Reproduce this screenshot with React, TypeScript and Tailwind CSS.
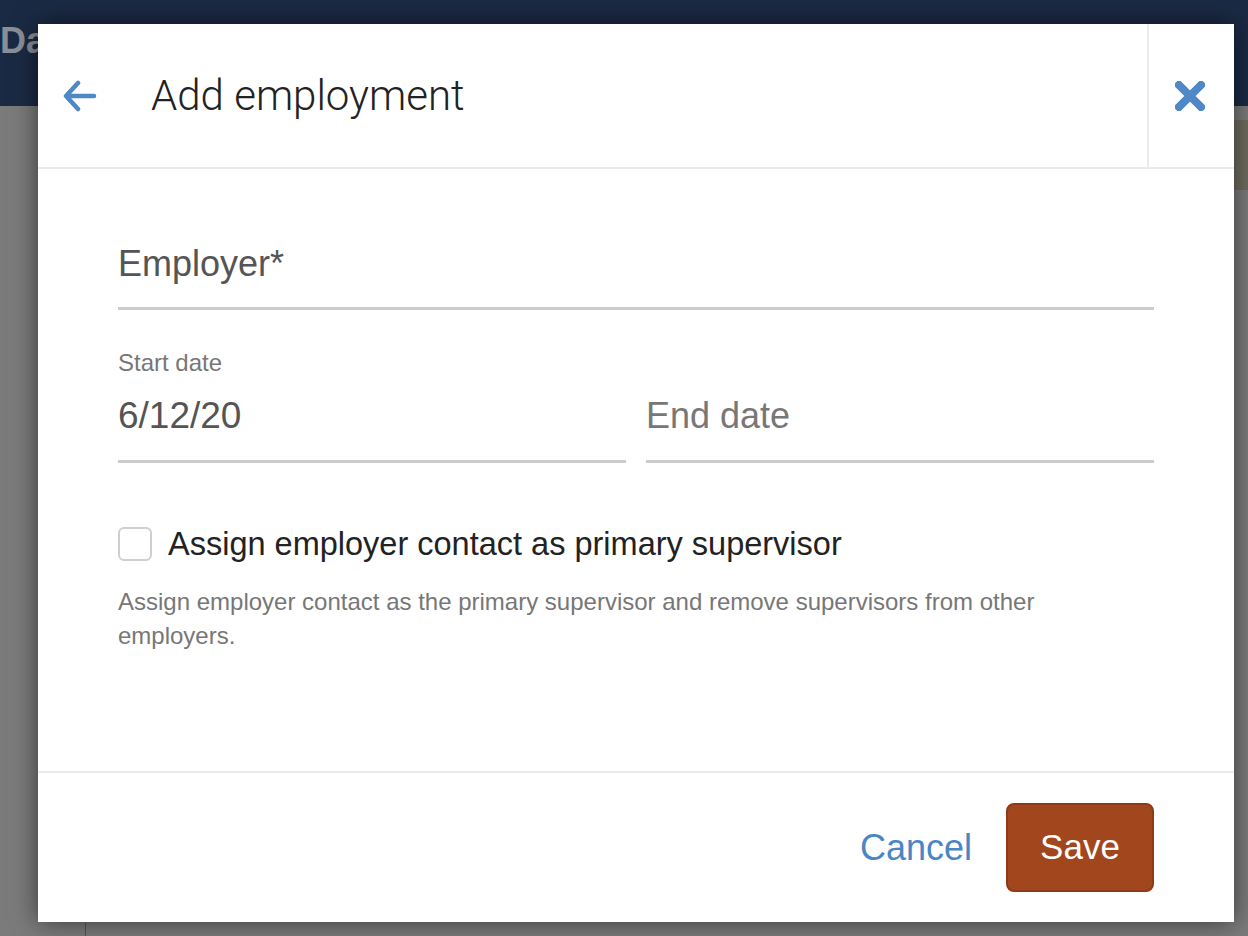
import { useState } from "react";

function BackArrow() {
  return (
    <svg width="34" height="32" viewBox="0 0 34 32" fill="none">
      <path
        d="M31 16H4M15 3L3 16l12 13"
        stroke="#4f88c6"
        strokeWidth="4.5"
        strokeLinecap="round"
        strokeLinejoin="round"
      />
    </svg>
  );
}

function CloseIcon() {
  return (
    <svg width="30" height="30" viewBox="0 0 30 30">
      <path d="M4 4L26 26M26 4L4 26" stroke="#4f88c6" strokeWidth="8" strokeLinecap="square" />
    </svg>
  );
}

export default function App() {
  const [checked, setChecked] = useState(false);

  return (
    <div className="relative h-[936px] w-[1248px] overflow-hidden bg-[#7b7b7b] font-['Liberation_Sans',Arial,sans-serif]">
      {/* dimmed page behind the dialog */}
      <div className="flex h-[106px] items-start bg-[#1b2a44] pt-[14px]">
        <span className="text-[36px] font-bold text-[#8a8f98]">Dashboard and Reports</span>
      </div>
      <div className="flex h-[830px]">
        <div className="w-[86px] border-r border-[#555]" />
        <div className="flex-1" />
        <div className="flex w-[90px] flex-col">
          <div className="mt-[14px] h-[70px] bg-[#6f6c5e]" />
        </div>
      </div>

      {/* dialog */}
      <div className="absolute left-[38px] top-[24px] flex h-[898px] w-[1196px] flex-col bg-white shadow-[0_0_24px_rgba(0,0,0,0.55)]">
        <div className="flex h-[145px] border-b-2 border-[#ebebeb]">
          <button className="flex w-[113px] items-center pl-[25px]">
            <BackArrow />
          </button>
          <h1 className="flex flex-1 items-center font-['Roboto',sans-serif] text-[42px] font-light text-[#222]">
            Add employment
          </h1>
          <button className="flex w-[87px] items-center justify-center border-l-2 border-[#ebebeb] pr-[4px]">
            <CloseIcon />
          </button>
        </div>

        <div className="flex flex-1 flex-col px-[80px] pt-[74px]">
          <div className="border-b-[3px] border-[#cccccc] pb-[22px] text-[36px] leading-[42px] text-[#555]">
            Employer*
          </div>

          <div className="mt-[40px] flex gap-[20px]">
            <div className="flex-1 border-b-[3px] border-[#cccccc]">
              <div className="text-[24px] leading-[26px] text-[#777]">Start date</div>
              <div className="pb-[23px] pt-[19px] text-[37px] leading-[42px] text-[#555]">6/12/20</div>
            </div>
            <div className="flex flex-1 flex-col justify-end border-b-[3px] border-[#cccccc]">
              <div className="pb-[23px] text-[36px] leading-[42px] text-[#777]">End date</div>
            </div>
          </div>

          <label className="mt-[63px] flex cursor-pointer items-center gap-[16px]">
            <span
              onClick={() => setChecked(!checked)}
              className="h-[34px] w-[34px] rounded-[6px] border-2 border-[#cfcfcf] bg-white"
            />
            <span className="text-[32.5px] leading-[36px] text-[#222]">
              Assign employer contact as primary supervisor
            </span>
          </label>
          <p className="mt-[23px] text-[24px] leading-[34px] text-[#777]">
            Assign employer contact as the primary supervisor and remove supervisors from other
            <br />
            employers.
          </p>
        </div>

        <div className="flex h-[151px] items-center justify-end gap-[34px] border-t-2 border-[#ebebeb] px-[80px]">
          <button className="text-[36px] text-[#4a86c5]">Cancel</button>
          <button className="h-[89px] w-[148px] rounded-[8px] border-2 border-[#8e3a17] bg-[#a2461e] text-[35px] text-white">
            Save
          </button>
        </div>
      </div>
    </div>
  );
}
